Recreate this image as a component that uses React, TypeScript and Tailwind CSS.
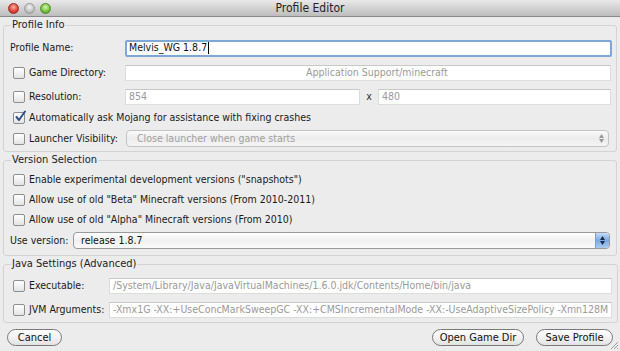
import React from "react";

const font = { fontFamily: '"DejaVu Sans Condensed", "DejaVu Sans", sans-serif' };

function Check({ checked = false }: { checked?: boolean }) {
  return (
    <span className="relative inline-block w-[12px] h-[12px] rounded-[2px] border border-[#8e8e8e] bg-gradient-to-b from-white to-[#e4e4e4] shrink-0">
      {checked && (
        <svg className="absolute left-[0px] top-[-3px]" width="13" height="13" viewBox="0 0 13 13">
          <path d="M2.5 7 L5 10 L11 1.5" fill="none" stroke="#2f4f8a" strokeWidth="2" strokeLinecap="round" strokeLinejoin="round" />
        </svg>
      )}
    </span>
  );
}

function Field({ children, className = "" }: { children?: React.ReactNode; className?: string }) {
  return (
    <div className={`h-[16px] bg-white border border-[#dcdcdc] border-t-[#c9c9c9] flex items-center px-[3px] text-[#9a9a9a] whitespace-nowrap overflow-hidden ${className}`}>
      {children}
    </div>
  );
}

function Stepper({ active = false }: { active?: boolean }) {
  return (
    <div
      className={`w-[14px] h-full flex flex-col items-center justify-center gap-[1px] rounded-r-[4px] ${
        active ? "bg-gradient-to-b from-[#c6dcf6] via-[#7aa9e6] to-[#a9cbf3] border-l border-[#7e9dc8]" : ""
      }`}
    >
      <svg width="5" height="4" viewBox="0 0 5 4"><path d="M2.5 0 L5 4 L0 4Z" fill={active ? "#1c2a44" : "#9a9a9a"} /></svg>
      <svg width="5" height="4" viewBox="0 0 5 4"><path d="M0 0 L5 0 L2.5 4Z" fill={active ? "#1c2a44" : "#9a9a9a"} /></svg>
    </div>
  );
}

function Group({ title, children, className = "" }: { title: string; children: React.ReactNode; className?: string }) {
  return (
    <fieldset className={`mx-[3px] border border-[#d3d3d3] rounded-[3px] px-[5px] ${className}`}>
      <legend className="ml-[2px] px-[1px] text-[11px] text-[#222] leading-[12px]">{title}</legend>
      {children}
    </fieldset>
  );
}

function CLabel({ w, children }: { w: string; children: React.ReactNode }) {
  return <span className={`${w} flex items-center gap-[4px] pl-[4px] shrink-0`}><Check />{children}</span>;
}

export default function App() {
  return (
    <div className="w-[620px] h-[351px] bg-[#ececec] flex flex-col text-[10.5px] whitespace-nowrap text-[#1a1a1a] overflow-hidden relative" style={font}>
      {/* title bar */}
      <div className="h-[17px] shrink-0 bg-gradient-to-b from-[#e9e9e9] to-[#bdbdbd] border-b border-[#8a8a8a] flex items-center relative">
        <div className="flex gap-[5px] pl-[8px]">
          <span className="w-[11px] h-[11px] rounded-full bg-[radial-gradient(circle_at_50%_35%,#ffb3a8,#e0463a_55%,#a8231c)] border border-[#9c2d26]" />
          <span className="w-[11px] h-[11px] rounded-full bg-[radial-gradient(circle_at_50%_35%,#f4f4f4,#c6c6c6_55%,#9b9b9b)] border border-[#9a9a9a]" />
          <span className="w-[11px] h-[11px] rounded-full bg-[radial-gradient(circle_at_50%_35%,#d8f5b0,#7bc443_55%,#3d8a1c)] border border-[#4d8a2d]" />
        </div>
        <div className="absolute inset-0 flex items-center justify-center text-[12px] text-[#222]">Profile Editor</div>
      </div>

      <Group title="Profile Info" className="mt-[2px] pb-[4px]">
        <div className="flex items-center h-[16px] mt-[9px]">
          <span className="w-[116px] pl-[1px]">Profile Name:</span>
          <div className="flex-1 h-[17px] bg-white border-2 border-[#7ea7d8] rounded-[2px] flex items-center px-[2px] text-[#111] -mr-[1px]">
            Melvis_WG 1.8.7<span className="w-px h-[12px] bg-black ml-px" />
          </div>
        </div>
        <div className="flex items-center h-[16px] mt-[9px]">
          <CLabel w="w-[116px]">Game Directory:</CLabel>
          <Field className="flex-1 pl-[180px]">Application Support/minecraft</Field>
        </div>
        <div className="flex items-center h-[16px] mt-[8px]">
          <CLabel w="w-[116px]">Resolution:</CLabel>
          <Field className="w-[235px]">854</Field>
          <span className="w-[18px] text-center text-[#333]">x</span>
          <Field className="flex-1">480</Field>
        </div>
        <div className="flex items-center h-[16px] mt-[5px] gap-[4px] pl-[4px]">
          <Check checked />
          <span>Automatically ask Mojang for assistance with fixing crashes</span>
        </div>
        <div className="flex items-center h-[17px] mt-[4px]">
          <CLabel w="w-[117px]">Launcher Visibility:</CLabel>
          <div className="flex-1 h-[17px] mr-[2px] rounded-[4px] border border-[#c4c4c4] bg-gradient-to-b from-[#fafafa] via-[#ececec] to-[#f5f5f5] flex items-center justify-between pl-[10px] text-[#a0a0a0]">
            <span>Close launcher when game starts</span>
            <Stepper />
          </div>
        </div>
      </Group>

      <Group title="Version Selection" className="mt-[2px] pb-[6px]">
        {[
          'Enable experimental development versions ("snapshots")',
          'Allow use of old "Beta" Minecraft versions (From 2010-2011)',
          'Allow use of old "Alpha" Minecraft versions (From 2010)',
        ].map((t, i) => (
          <div key={i} className={`flex items-center h-[16px] gap-[4px] pl-[4px] ${i === 0 ? "mt-[6px]" : "mt-[4px]"}`}>
            <Check />
            <span>{t}</span>
          </div>
        ))}
        <div className="flex items-center h-[17px] mt-[4px]">
          <span className="w-[64px] pl-[1px]">Use version:</span>
          <div className="flex-1 h-[17px] mr-[1px] rounded-[4px] border border-[#9a9a9a] bg-gradient-to-b from-white via-[#f0f0f0] to-[#fbfbfb] flex items-center justify-between pl-[7px] text-[#111]">
            <span>release 1.8.7</span>
            <Stepper active />
          </div>
        </div>
      </Group>

      <Group title="Java Settings (Advanced)" className="mt-[2px] pb-[4px]">
        <div className="flex items-center h-[16px] mt-[8px]">
          <CLabel w="w-[100px]">Executable:</CLabel>
          <Field className="flex-1">/System/Library/Java/JavaVirtualMachines/1.6.0.jdk/Contents/Home/bin/java</Field>
        </div>
        <div className="flex items-center h-[16px] mt-[8px]">
          <CLabel w="w-[100px]">JVM Arguments:</CLabel>
          <Field className="flex-1">-Xmx1G -XX:+UseConcMarkSweepGC -XX:+CMSIncrementalMode -XX:-UseAdaptiveSizePolicy -Xmn128M</Field>
        </div>
      </Group>

      <div className="flex items-center mt-[6px] px-[7px]">
        <button className="h-[17px] w-[55px] rounded-full border border-[#7a7a7a] bg-gradient-to-b from-white via-[#f2f2f2] to-[#e2e2e2] text-[11px] text-[#111]">Cancel</button>
        <div className="flex-1" />
        <button className="h-[17px] w-[92px] rounded-full border border-[#7a7a7a] bg-gradient-to-b from-white via-[#f2f2f2] to-[#e2e2e2] text-[11px] text-[#111]">Open Game Dir</button>
        <button className="h-[17px] w-[77px] ml-[12px] rounded-full border border-[#7a7a7a] bg-gradient-to-b from-white via-[#f2f2f2] to-[#e2e2e2] text-[11px] text-[#111]">Save Profile</button>
      </div>

      <svg className="absolute right-[1px] bottom-[1px]" width="10" height="10" viewBox="0 0 10 10">
        <path d="M9 2 L2 9 M9 5 L5 9 M9 8 L8 9" stroke="#a0a0a0" strokeWidth="1" />
      </svg>
    </div>
  );
}
